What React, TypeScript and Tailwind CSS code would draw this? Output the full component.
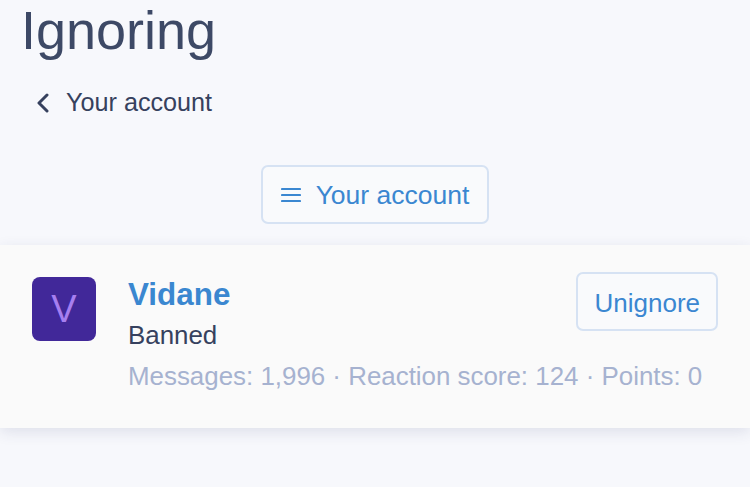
import React from "react";

export default function App() {
  return (
    <div
      className="w-[750px] h-[487px] overflow-hidden bg-[#f7f8fc] text-[#3a4563]"
      style={{ fontFamily: '"Liberation Sans", Arial, sans-serif' }}
    >
      <h1 className="pl-[21px] pt-[0px] text-[54px] leading-[60px] text-[#3d4966]">Ignoring</h1>
      <div className="flex items-center pl-[36px] mt-[25px] h-[36px]">
        <svg width="14" height="20" viewBox="0 0 14 20" className="text-[#36415e]">
          <path d="M11 2 L3 10 L11 18" fill="none" stroke="currentColor" strokeWidth="3" strokeLinecap="round" strokeLinejoin="round" />
        </svg>
        <span className="ml-[16px] text-[25.2px] text-[#36415e]">Your account</span>
      </div>
      <div className="flex justify-center mt-[44px]">
        <div className="flex items-center h-[59px] px-[18px] rounded-[7px] border-2 border-[#d6e2f3] bg-[#f9fafc] text-[#3b87d1]">
          <svg width="20" height="16" viewBox="0 0 20 16">
            <path d="M1 2h18M1 8h18M1 14h18" stroke="currentColor" strokeWidth="2.2" strokeLinecap="round" />
          </svg>
          <span className="ml-[15px] pt-[3px] text-[26.5px]">Your account</span>
        </div>
      </div>
      <div className="mt-[21px] h-[183px] bg-[#fafafa] shadow-[0_4px_14px_rgba(40,50,110,0.12)] flex pl-[32px] pr-[32px] pt-[32px]">
        <div className="shrink-0 w-[64px] h-[64px] rounded-[8px] bg-[#412899] flex items-center justify-center text-[#a67ff0] text-[38px]">
          V
        </div>
        <div className="flex-1 min-w-0 ml-[32px] -mt-[5px]">
          <div className="float-right h-[59px] px-[16px] pt-[3px] flex items-center rounded-[7px] border-2 border-[#d6e2f3] bg-[#f9fafc] text-[#3b87d1] text-[26px]">
            Unignore
          </div>
          <div className="pt-[4px] text-[31.4px] font-bold text-[#3a87d0] leading-[38px]">Vidane</div>
          <div className="text-[25.9px] text-[#36415e] leading-[34px] mt-[4px]">Banned</div>
          <div className="text-[25.9px] text-[#a6b2d0] leading-[32px] mt-[8px] whitespace-nowrap">
            Messages: 1,996 · Reaction score: 124 · Points: 0
          </div>
        </div>
      </div>
    </div>
  );
}
